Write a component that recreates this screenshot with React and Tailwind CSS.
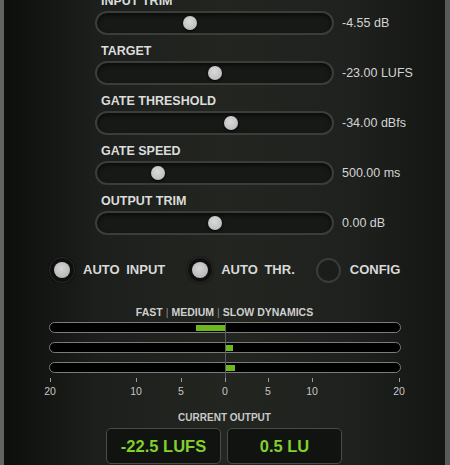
// App.jsx — loudness processor panel (sliders, toggles, meters, readouts)
import React from 'react';

const SLIDERS = [
  { label: 'INPUT TRIM', value: '-4.55 dB', x: 190 },
  { label: 'TARGET', value: '-23.00 LUFS', x: 215 },
  { label: 'GATE THRESHOLD', value: '-34.00 dBfs', x: 231 },
  { label: 'GATE SPEED', value: '500.00 ms', x: 158 },
  { label: 'OUTPUT TRIM', value: '0.00 dB', x: 215 },
];

// meter fills: left edge + width, in px relative to the bar's inner box
const METERS = [
  { left: 146, width: 29 },
  { left: 175, width: 8 },
  { left: 175, width: 10 },
];

const SCALE = [
  { v: '20', x: 50 },
  { v: '10', x: 136 },
  { v: '5', x: 181 },
  { v: '0', x: 225 },
  { v: '5', x: 268 },
  { v: '10', x: 312 },
  { v: '20', x: 399 },
];

const FONT = { fontFamily: '"Liberation Sans", Arial, sans-serif' };

const Slider = ({ label, value, x }) => (
  <div className="flex flex-col">
    <div className="h-[14px] pl-[6px] text-[12.5px] font-bold leading-[15px] text-[#dcdcdc]">{label}</div>
    <div className="mt-[3px] flex h-[24px] items-center">
      <div className="relative h-[24px] w-[239px] rounded-full border-2 border-[#3a3d39] bg-[#171916] shadow-[inset_0_2px_4px_rgba(0,0,0,0.6)]">
        <div
          className="absolute top-[3px] h-[14px] w-[14px] rounded-full bg-[radial-gradient(circle_at_45%_40%,#dadada,#b4b4b4)] shadow-[0_1px_3px_rgba(0,0,0,0.9)]"
          style={{ left: x - 95 - 2 - 7 }}
        />
      </div>
      <span className="ml-[8px] text-[12.5px] text-[#d4d4d4]">{value}</span>
    </div>
  </div>
);

const Toggle = ({ on, label, gap = 'gap-[8px]' }) => (
  <div className={`flex items-center ${gap}`}>
    {on ? (
      <div className="flex h-[26px] w-[26px] items-center justify-center rounded-full border border-[#2b2d2a] bg-[#0e0f0e] shadow-[0_0_2px_rgba(0,0,0,0.8)]">
        <div className="h-[16px] w-[16px] rounded-full bg-[radial-gradient(circle_at_45%_40%,#d4d4d4,#acacac)]" />
      </div>
    ) : (
      <div className="h-[25px] w-[25px] rounded-full border-[2px] border-[#3a3c39] bg-[#1b1d1a]" />
    )}
    <span className="text-[13px] font-bold text-[#d8d8d8] [word-spacing:3px]">{label}</span>
  </div>
);

export default function App() {
  return (
    <div
      className="flex h-[465px] w-[450px] overflow-hidden bg-[linear-gradient(to_right,#0c0e0c_0%,#1c1f1b_22%,#222520_50%,#1e211d_78%,#131513_100%)]"
      style={FONT}
    >
      <div className="w-[4px] shrink-0 bg-[#626262]" />

      <div className="flex flex-1 flex-col">
        {/* sliders */}
        <div className="mt-[-6px] flex flex-col gap-[9px] pl-[91px]">
          {SLIDERS.map(s => <Slider key={s.label} {...s} />)}
        </div>

        {/* toggles */}
        <div className="mt-[22px] flex h-[26px] items-center pl-[45px]">
          <Toggle on label="AUTO INPUT" />
          <div className="w-[22px]" />
          <Toggle on label="AUTO THR." />
          <div className="w-[21px]" />
          <Toggle label="CONFIG" gap="gap-[9px]" />
        </div>

        {/* meters */}
        <div className="mt-[23px] flex h-[12px] items-center justify-center text-[10.5px] font-bold leading-[12px] text-[#cfcfcf]">
          FAST<span className="mx-[3px] font-normal text-[#8a8a8a]">|</span>MEDIUM
          <span className="mx-[3px] font-normal text-[#8a8a8a]">|</span>SLOW DYNAMICS
        </div>

        <div className="relative ml-[45px] mt-[4px] w-[352px]">
          <div className="flex flex-col gap-[9px]">
            {METERS.map((m, i) => (
              <div key={i} className="relative h-[11px] rounded-full border border-[#7c7c7c] bg-black">
                <div className="absolute top-[2px] h-[6px] bg-[#6db81c]" style={{ left: m.left, width: m.width }} />
              </div>
            ))}
          </div>
          <div className="absolute left-[176px] top-0 h-[60px] w-px bg-[#5c5e5b]" />

          {/* scale */}
          <div className="relative h-[24px]">
            {SCALE.map((t, i) => (
              <div
                key={i}
                className="absolute top-[5px] flex w-[20px] flex-col items-center"
                style={{ left: t.x - 49 - 10 }}
              >
                <div className="h-[4px] w-px bg-[#9a9a9a]" />
                <span className="mt-[3px] text-[10.5px] leading-[12px] text-[#c6c6c6]">{t.v}</span>
              </div>
            ))}
          </div>
        </div>

        <div className="mt-[15px] h-[12px] text-center text-[10px] font-bold leading-[12px] text-[#c8c8c8]">
          CURRENT OUTPUT
        </div>

        <div className="mt-[4px] flex justify-center gap-[6px] pr-[1px]">
          <div className="flex h-[36px] w-[115px] items-center justify-center rounded-[5px] border border-[#4a4c49] bg-[#111311]">
            <span className="text-[16.5px] font-bold text-[#82cf2e]">-22.5 LUFS</span>
          </div>
          <div className="flex h-[36px] w-[115px] items-center justify-center rounded-[5px] border border-[#4a4c49] bg-[#111311]">
            <span className="text-[16.5px] font-bold text-[#82cf2e]">0.5 LU</span>
          </div>
        </div>
      </div>

      <div className="w-[5px] shrink-0 bg-[#5a5a5a]" />
    </div>
  );
}
